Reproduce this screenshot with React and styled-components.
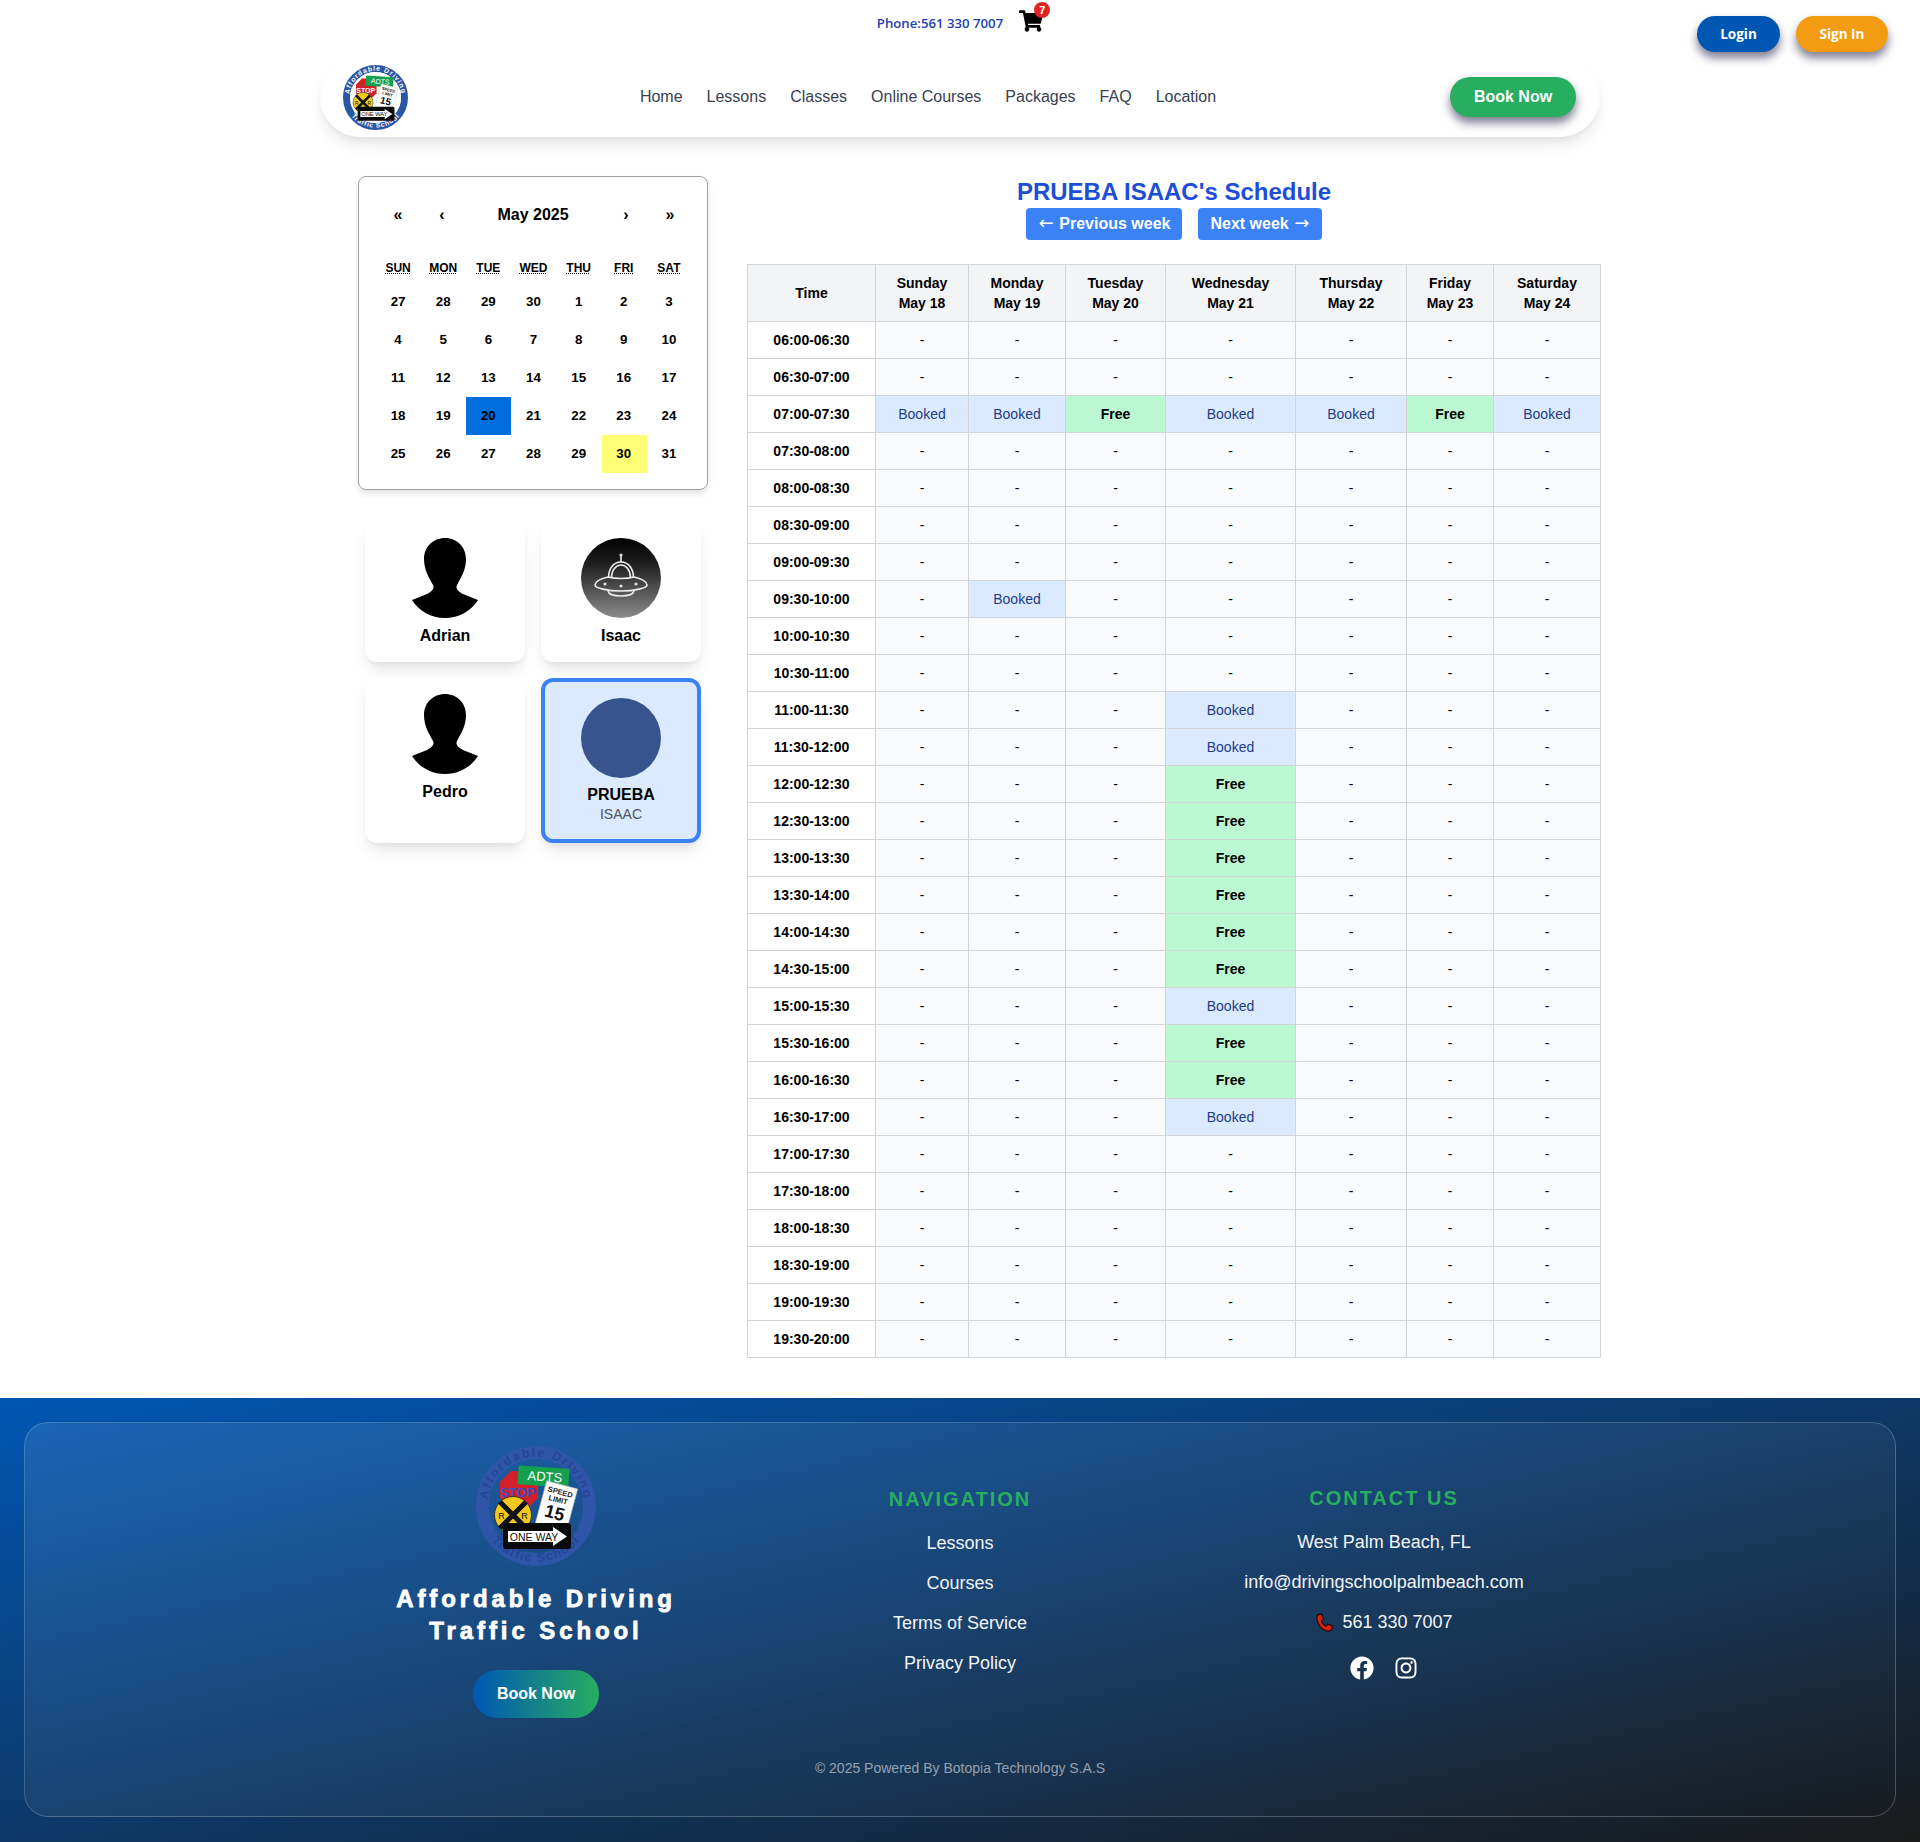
import styled, { createGlobalStyle } from 'styled-components';
import { FaShoppingCart, FaFacebook, FaInstagram } from 'react-icons/fa';

const GlobalStyle = createGlobalStyle`
  body {
    margin: 0;
    background: #fff;
    font-family: 'Liberation Sans', Arial, sans-serif;
    color: #000;
  }
  * { box-sizing: border-box; }
`;

/* header */
const TopBar = styled.div`
  height: 57px;
  display: flex;
  justify-content: center;
  align-items: flex-start;
  gap: 16px;
  padding-top: 9px;
`;

const Phone = styled.span`
  font-family: 'Open Sans', sans-serif;
  font-size: 13.2px;
  font-weight: 600;
  line-height: 28px;
  color: #1e40af;
`;

const CartWrap = styled.div`
  position: relative;
  width: 24px;
  height: 21px;
`;

const Badge = styled.span`
  position: absolute;
  top: -7px;
  right: -7px;
  width: 16px;
  height: 16px;
  border-radius: 50%;
  background: #dc2626;
  color: #fff;
  font-size: 11px;
  font-weight: 700;
  line-height: 16px;
  text-align: center;
`;

const AuthButtons = styled.div`
  position: absolute;
  top: 16px;
  right: 32px;
  display: flex;
  gap: 16px;
`;

const AuthButton = styled.button`
  height: 36px;
  width: ${(props) => props.$w}px;
  padding: 0;
  border: none;
  border-radius: 18px;
  background: ${(props) => props.$bg};
  color: #fff;
  font-family: 'Open Sans', sans-serif;
  font-size: 13.5px;
  font-weight: 700;
  box-shadow: 0 6px 10px rgba(20, 20, 60, 0.55);
`;

const Nav = styled.nav`
  width: 1280px;
  height: 80px;
  margin: 0 auto;
  padding: 0 24px 0 23px;
  display: flex;
  align-items: center;
  justify-content: space-between;
  background: #fff;
  border-radius: 40px;
  box-shadow: 0 10px 15px -3px rgba(0, 0, 0, 0.1), 0 4px 6px -2px rgba(0, 0, 0, 0.05);
`;

const NavLinks = styled.div`
  display: flex;
  gap: 24px;
  padding-right: 2px;
`;

const NavLink = styled.a`
  font-size: 16px;
  line-height: 24px;
  color: #374151;
`;

const BookNow = styled.button`
  width: 126px;
  height: 40px;
  border: none;
  border-radius: 20px;
  background: #27ae60;
  color: #fff;
  font-family: inherit;
  font-size: 16px;
  font-weight: 700;
  box-shadow: 0 6px 10px rgba(20, 20, 60, 0.55);
`;

/* main */
const Main = styled.main`
  width: 1280px;
  margin: 0 auto;
  padding: 39px 0 40px 38px;
  display: flex;
  align-items: flex-start;
  gap: 39px;
`;

const Sidebar = styled.aside`
  width: 350px;
  flex: none;
`;

const Calendar = styled.div`
  border: 1px solid #a0a096;
  border-radius: 8px;
  padding: 16px 15px 16px 17px;
  box-shadow: 0 4px 6px rgba(0, 0, 0, 0.1);
`;

const CalNav = styled.div`
  height: 44px;
  margin-bottom: 16px;
  display: flex;
  align-items: center;
`;

const CalArrow = styled.button`
  width: 44px;
  height: 44px;
  padding: 0;
  border: none;
  background: none;
  color: #000;
  font-family: inherit;
  font-size: 16px;
  font-weight: 700;
`;

const CalLabel = styled.span`
  flex: 1;
  padding-right: 2px;
  text-align: center;
  font-size: 16px;
  font-weight: 700;
`;

const CalGrid = styled.div`
  display: grid;
  grid-template-columns: repeat(7, 1fr);
`;

const Weekday = styled.div`
  height: 30px;
  padding: 6px 1px 6px 0;
  text-align: center;
  font-size: 12px;
  line-height: 18px;
  font-weight: 700;
  text-transform: uppercase;

  abbr {
    text-decoration: underline dotted;
  }
`;

const Tile = styled.div`
  height: 38px;
  padding: 0 1px 2px 0;
  display: flex;
  align-items: center;
  justify-content: center;
  font-size: 13.33px;
  font-weight: 700;
  background: ${(props) => props.$bg || 'transparent'};
`;

const Cards = styled.div`
  margin: 32px 7px 0;
  display: grid;
  grid-template-columns: 160px 160px;
  gap: 16px;
`;

const Card = styled.div`
  display: flex;
  flex-direction: column;
  align-items: center;
  padding: ${(props) => (props.$selected ? '16px 16px 18px' : '16px 16px 14px')};
  border-radius: 12px;
  background: ${(props) => (props.$selected ? '#dbeafe' : '#fff')};
  border: ${(props) => (props.$selected ? '4px solid #3b82f6' : 'none')};
  box-shadow: 0 10px 15px -3px rgba(0, 0, 0, 0.1), 0 4px 6px -2px rgba(0, 0, 0, 0.05);
`;

const AvatarCircle = styled.div`
  width: 80px;
  height: 80px;
  border-radius: 50%;
  flex: none;
  background: ${(props) => props.$bg};
`;

const Silhouette = styled.svg`
  display: block;
  width: 80px;
  height: 80px;
  flex: none;
`;

const CardName = styled.div`
  margin-top: ${(props) => (props.$selected ? 5 : 6)}px;
  font-size: 16px;
  line-height: 24px;
  font-weight: 700;
`;

const CardSub = styled.div`
  font-size: 14px;
  line-height: 14px;
  color: #4b5563;
`;

const Schedule = styled.section`
  flex: 1;
  display: flex;
  flex-direction: column;
  align-items: center;
`;

const Title = styled.h2`
  margin: 0;
  font-size: 24px;
  line-height: 32px;
  font-weight: 700;
  color: #1d4ed8;
`;

const WeekButtons = styled.div`
  display: flex;
  gap: 16px;
  margin-bottom: 24px;
`;

const WeekButton = styled.button`
  height: 32px;
  padding: 0 12px;
  border: none;
  border-radius: 4px;
  background: #3b82f6;
  color: #fff;
  font-family: inherit;
  font-size: 16px;
  font-weight: 700;
`;

const Arrow = styled.span`
  display: inline-block;
  width: 17px;
  font-family: 'DejaVu Sans', sans-serif;
  font-size: 18px;
  font-weight: 400;
  line-height: 0;
  text-align: center;
`;

const Table = styled.table`
  width: 853px;
  table-layout: fixed;
  border-collapse: collapse;
  font-size: 14px;
  line-height: 20px;
`;

const Col = styled.col`
  width: ${(props) => props.$w}px;
`;

const Th = styled.th`
  padding: 8px 4px;
  border: 1px solid #d1d5db;
  background: #f3f4f6;
  font-weight: 700;
`;

const TimeCell = styled.td`
  padding: 8px 4px;
  border: 1px solid #d1d5db;
  background: #fff;
  text-align: center;
  font-weight: 700;
`;

const cellBg = { Booked: '#dbeafe', Free: '#bbf7d0' };
const cellColor = { Booked: '#1e3a8a', Free: '#000' };

const Cell = styled.td`
  padding: 8px 4px;
  border: 1px solid #d1d5db;
  text-align: center;
  background: ${(props) => cellBg[props.$status] || '#f9fafb'};
  color: ${(props) => cellColor[props.$status] || '#000'};
  font-weight: ${(props) => (props.$status === 'Free' ? 700 : 400)};
`;

/* footer */
const Footer = styled.footer`
  height: 444px;
  padding: 24px 24px 25px;
  background: linear-gradient(to bottom right, #0056b3, #1a1a1a);
`;

const FooterPanel = styled.div`
  height: 100%;
  padding-top: 23px;
  display: flex;
  flex-direction: column;
  align-items: center;
  border: 1px solid rgba(255, 255, 255, 0.2);
  border-radius: 24px;
  background: linear-gradient(to bottom right, rgba(255, 255, 255, 0.1), rgba(255, 255, 255, 0));
`;

const FooterCols = styled.div`
  width: 1280px;
  display: grid;
  grid-template-columns: 432px 416px 432px;
  align-items: center;
  text-align: center;
  color: #fff;
`;

const BrandCol = styled.div`
  display: flex;
  flex-direction: column;
  align-items: center;
`;

const BrandName = styled.h3`
  margin: 17px 0 23px;
  font-size: 24px;
  line-height: 32px;
  font-weight: 900;
  letter-spacing: 3.9px;
  color: #fff;
  -webkit-text-stroke: 0.8px #fff;
`;

const FooterBook = styled.button`
  width: 126px;
  height: 48px;
  border: none;
  border-radius: 24px;
  background: linear-gradient(90deg, #0056b3, #27ae60);
  color: #fff;
  font-family: inherit;
  font-size: 16px;
  font-weight: 700;
`;

const LinkCol = styled.div`
  display: flex;
  flex-direction: column;
  align-items: center;
  gap: 12px;
  padding-bottom: ${(props) => props.$pb || 0}px;
`;

const ColTitle = styled.h4`
  margin: 0 0 4px;
  font-size: 20px;
  line-height: 28px;
  font-weight: 700;
  letter-spacing: 2px;
  color: #27ae60;
`;

const FooterLine = styled.div`
  display: flex;
  align-items: center;
  gap: 8px;
  font-size: 18px;
  line-height: 28px;
  color: #f3f4f6;
`;

const Socials = styled.div`
  display: flex;
  gap: 20px;
  margin-top: 8px;
`;

const Copyright = styled.p`
  margin: 40px 0 0;
  font-size: 14px;
  line-height: 20px;
  color: rgba(255, 255, 255, 0.55);
`;

function Logo({ size, footer }) {
  const id = footer ? 'footer' : 'nav';
  const ring = footer ? '#2f55a8' : '#2a57a5';
  const ringText = footer ? '#234695' : '#fff';
  return (
    <svg width={size} height={size} viewBox="0 0 120 120">
      <defs>
        <path id={`${id}-top`} d="M12 66a48.5 48.5 0 1 1 96 0" />
        <path id={`${id}-bottom`} d="M6 78a57.5 57.5 0 0 0 108 0" />
      </defs>
      <circle cx="60" cy="60" r="53.5" fill="none" stroke={ring} strokeWidth="13" />
      {!footer && <circle cx="60" cy="60" r="47" fill="#fff" />}
      <text fontFamily="Liberation Sans" fontWeight="700" fontSize="12.5" letterSpacing="1.8" fill={ringText}>
        <textPath href={`#${id}-top`} startOffset="50%" textAnchor="middle">Affordable Driving</textPath>
      </text>
      <text fontFamily="Liberation Sans" fontWeight="700" fontSize="12.5" letterSpacing="1.4" fill={ringText}>
        <textPath href={`#${id}-bottom`} startOffset="50%" textAnchor="middle">Traffic School</textPath>
      </text>
      <polygon points="35,25 51,25 62,36 62,52 51,63 35,63 24,52 24,36" fill="#d3212c" />
      <text x="42" y="51" textAnchor="middle" fontFamily="Liberation Sans" fontWeight="700" fontSize="13" fill={footer ? '#3c4fc0' : '#fff'}>STOP</text>
      <g transform="rotate(4 67 30)">
        <rect x="42" y="21" width="51" height="19" rx="1.5" fill="#14a04c" />
        <text x="69" y="35" textAnchor="middle" fontFamily="Liberation Sans" fontSize="13" fill="#fff">ADTS</text>
      </g>
      <g transform="rotate(15 80 60)">
        <rect x="64.5" y="38" width="32" height="44" fill="#fff" stroke="#bbb" strokeWidth="0.6" />
        <text x="80.5" y="48" textAnchor="middle" fontFamily="Liberation Sans" fontWeight="700" fontSize="7.5" fill="#222">SPEED</text>
        <text x="80.5" y="56" textAnchor="middle" fontFamily="Liberation Sans" fontWeight="700" fontSize="7.5" fill="#222">LIMIT</text>
        <text x="80.5" y="73" textAnchor="middle" fontFamily="Liberation Sans" fontWeight="700" fontSize="18" fill="#111">15</text>
      </g>
      <circle cx="37" cy="69" r="18.5" fill="#f3c81e" stroke="#333" strokeWidth="1" />
      <path d="M24 56 L50 82 M50 56 L24 82" stroke="#111" strokeWidth="5" />
      <text x="25.5" y="73" textAnchor="middle" fontFamily="Liberation Sans" fontSize="9" fill="#111">R</text>
      <text x="48.5" y="73" textAnchor="middle" fontFamily="Liberation Sans" fontSize="9" fill="#111">R</text>
      <rect x="27" y="77" width="68" height="26" rx="3" fill="#0a0a0a" />
      <polygon points="32,85 77,85 77,81 91,90.5 77,100 77,96 32,96" fill="#fff" />
      <text x="58" y="94.5" textAnchor="middle" fontFamily="Liberation Sans" fontSize="10.5" fill="#111">ONE WAY</text>
    </svg>
  );
}

function Person() {
  return (
    <Silhouette viewBox="0 0 80 80">
      <path d="M40 0C52 0 61 9 61 21C61 33 55 41 52 47C50 51 54 54 58 56L73 62C66 73 54 80 40 80C26 80 14 73 7 62L22 56C26 54 30 51 28 47C25 41 19 33 19 21C19 9 28 0 40 0Z" fill="#000" />
    </Silhouette>
  );
}

function Ufo() {
  return (
    <Silhouette viewBox="0 0 80 80">
      <defs>
        <linearGradient id="ufo-bg" x1="0" y1="0" x2="0" y2="1">
          <stop offset="0" stopColor="#000" />
          <stop offset="0.35" stopColor="#222" />
          <stop offset="1" stopColor="#8c8c8c" />
        </linearGradient>
      </defs>
      <circle cx="40" cy="40" r="40" fill="url(#ufo-bg)" />
      <g fill="none" stroke="#eee" strokeWidth="1.6">
        <path d="M40 24V18" />
        <path d="M27.5 40C27.5 30 33 24 40 24C47 24 52.5 30 52.5 40" />
        <path d="M30.5 40C30.5 32 35 27 40 27C45 27 49.5 32 49.5 40" />
        <path d="M27 39C19 41 14 44 14 47C14 50 26 53 40 53C54 53 66 50 66 47C66 44 61 41 53 39C46 41 34 41 27 39Z" />
        <path d="M27 53C28 57 34 58 40 58C46 58 52 57 53 53" />
      </g>
      <g fill="#ddd">
        <circle cx="40" cy="17" r="1.6" />
        <circle cx="24" cy="46" r="1.6" />
        <circle cx="40" cy="48" r="1.6" />
        <circle cx="55" cy="46" r="1.6" />
      </g>
    </Silhouette>
  );
}

function Handset() {
  return (
    <svg width="19" height="19" viewBox="0 0 20 20">
      <path
        d="M3 2L7 1L9 6.5L6.5 8.5C7.5 11 9 12.8 11.5 14L13.5 11.5L18.5 14L17.5 17.5C16.5 19 14 19.5 11 18.5C6 16.5 2.5 11 2 6C2 4.5 2.2 3 3 2Z"
        fill="#d9230f"
        stroke="#2a0000"
        strokeWidth="1.2"
        strokeLinejoin="round"
      />
    </svg>
  );
}

const navItems = ['Home', 'Lessons', 'Classes', 'Online Courses', 'Packages', 'FAQ', 'Location'];
const weekdays = [['Sun', 'Sunday'], ['Mon', 'Monday'], ['Tue', 'Tuesday'], ['Wed', 'Wednesday'], ['Thu', 'Thursday'], ['Fri', 'Friday'], ['Sat', 'Saturday']];
const calDays = [27, 28, 29, 30, 1, 2, 3, 4, 5, 6, 7, 8, 9, 10, 11, 12, 13, 14, 15, 16, 17, 18, 19, 20, 21, 22, 23, 24, 25, 26, 27, 28, 29, 30, 31];
const columns = [['Sunday', 'May 18', 93], ['Monday', 'May 19', 97], ['Tuesday', 'May 20', 100], ['Wednesday', 'May 21', 130], ['Thursday', 'May 22', 111], ['Friday', 'May 23', 87], ['Saturday', 'May 24', 107]];

function pad(n) {
  return String(n).padStart(2, '0');
}

// half hour slots from 06:00 to 20:00
const slots = Array.from({ length: 28 }, (_, i) => {
  const start = 360 + i * 30;
  const end = start + 30;
  return `${pad(Math.floor(start / 60))}:${pad(start % 60)}-${pad(Math.floor(end / 60))}:${pad(end % 60)}`;
});

const special = {
  '07:00-07:30': ['Booked', 'Booked', 'Free', 'Booked', 'Booked', 'Free', 'Booked'],
  '09:30-10:00': [null, 'Booked'],
  '11:00-11:30': [null, null, null, 'Booked'],
  '11:30-12:00': [null, null, null, 'Booked'],
  '12:00-12:30': [null, null, null, 'Free'],
  '12:30-13:00': [null, null, null, 'Free'],
  '13:00-13:30': [null, null, null, 'Free'],
  '13:30-14:00': [null, null, null, 'Free'],
  '14:00-14:30': [null, null, null, 'Free'],
  '14:30-15:00': [null, null, null, 'Free'],
  '15:00-15:30': [null, null, null, 'Booked'],
  '15:30-16:00': [null, null, null, 'Free'],
  '16:00-16:30': [null, null, null, 'Free'],
  '16:30-17:00': [null, null, null, 'Booked'],
};

export default function App() {
  return (
    <>
      <GlobalStyle />
      <TopBar>
        <Phone>Phone:561 330 7007</Phone>
        <CartWrap>
          <FaShoppingCart size={24} color="#000" />
          <Badge>7</Badge>
        </CartWrap>
      </TopBar>
      <AuthButtons>
        <AuthButton $w={83} $bg="#0056b3">Login</AuthButton>
        <AuthButton $w={92} $bg="#f39c12">Sign In</AuthButton>
      </AuthButtons>
      <Nav>
        <Logo size={65} />
        <NavLinks>
          {navItems.map((item) => (
            <NavLink key={item}>{item}</NavLink>
          ))}
        </NavLinks>
        <BookNow>Book Now</BookNow>
      </Nav>

      <Main>
        <Sidebar>
          <Calendar>
            <CalNav>
              <CalArrow>«</CalArrow>
              <CalArrow>‹</CalArrow>
              <CalLabel>May 2025</CalLabel>
              <CalArrow>›</CalArrow>
              <CalArrow>»</CalArrow>
            </CalNav>
            <CalGrid>
              {weekdays.map(([short, full]) => (
                <Weekday key={short}>
                  <abbr title={full}>{short}</abbr>
                </Weekday>
              ))}
              {calDays.map((day, i) => (
                <Tile key={i} $bg={i === 23 ? '#006edc' : i === 33 ? '#ffff76' : undefined}>
                  {day}
                </Tile>
              ))}
            </CalGrid>
          </Calendar>
          <Cards>
            <Card>
              <Person />
              <CardName>Adrian</CardName>
            </Card>
            <Card>
              <Ufo />
              <CardName>Isaac</CardName>
            </Card>
            <Card>
              <Person />
              <CardName>Pedro</CardName>
            </Card>
            <Card $selected>
              <AvatarCircle $bg="#37548f" />
              <CardName $selected>PRUEBA</CardName>
              <CardSub>ISAAC</CardSub>
            </Card>
          </Cards>
        </Sidebar>

        <Schedule>
          <Title>PRUEBA ISAAC's Schedule</Title>
          <WeekButtons>
            <WeekButton><Arrow>←</Arrow> Previous week</WeekButton>
            <WeekButton>Next week <Arrow>→</Arrow></WeekButton>
          </WeekButtons>
          <Table>
            <colgroup>
              <Col $w={128} />
              {columns.map(([day, , w]) => (
                <Col key={day} $w={w} />
              ))}
            </colgroup>
            <thead>
              <tr>
                <Th>Time</Th>
                {columns.map(([day, date]) => (
                  <Th key={day}>
                    {day}
                    <br />
                    {date}
                  </Th>
                ))}
              </tr>
            </thead>
            <tbody>
              {slots.map((slot) => (
                <tr key={slot}>
                  <TimeCell>{slot}</TimeCell>
                  {columns.map(([day], c) => {
                    const status = special[slot] ? special[slot][c] : null;
                    return (
                      <Cell key={day} $status={status}>
                        {status || '-'}
                      </Cell>
                    );
                  })}
                </tr>
              ))}
            </tbody>
          </Table>
        </Schedule>
      </Main>

      <Footer>
        <FooterPanel>
          <FooterCols>
            <BrandCol>
              <Logo size={120} footer />
              <BrandName>
                Affordable Driving
                <br />
                Traffic School
              </BrandName>
              <FooterBook>Book Now</FooterBook>
            </BrandCol>
            <LinkCol $pb={2}>
              <ColTitle>NAVIGATION</ColTitle>
              <FooterLine>Lessons</FooterLine>
              <FooterLine>Courses</FooterLine>
              <FooterLine>Terms of Service</FooterLine>
              <FooterLine>Privacy Policy</FooterLine>
            </LinkCol>
            <LinkCol>
              <ColTitle>CONTACT US</ColTitle>
              <FooterLine>West Palm Beach, FL</FooterLine>
              <FooterLine>info@drivingschoolpalmbeach.com</FooterLine>
              <FooterLine>
                <Handset />
                561 330 7007
              </FooterLine>
              <Socials>
                <FaFacebook size={24} color="#fff" />
                <FaInstagram size={24} color="#fff" />
              </Socials>
            </LinkCol>
          </FooterCols>
          <Copyright>© 2025 Powered By Botopia Technology S.A.S</Copyright>
        </FooterPanel>
      </Footer>
    </>
  );
}
